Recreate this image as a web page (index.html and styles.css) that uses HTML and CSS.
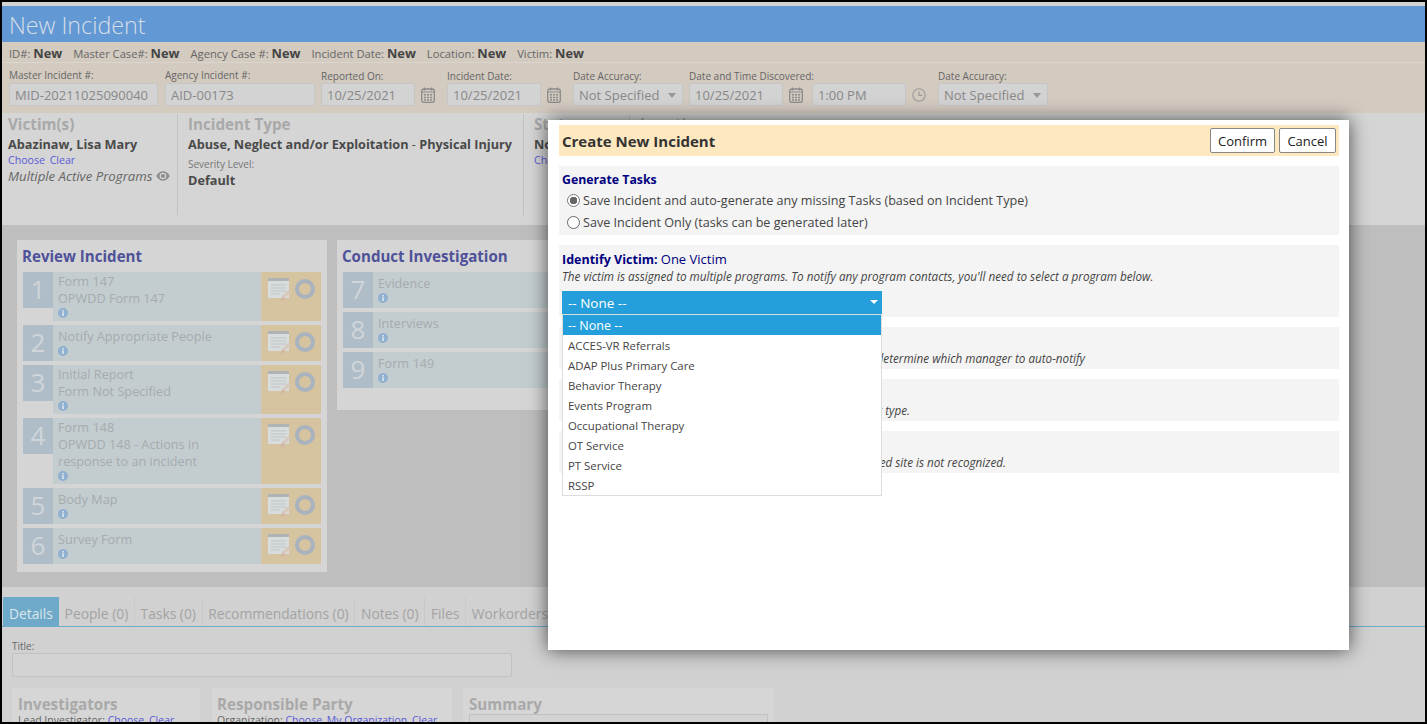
FILE: index.html
```html
<!DOCTYPE html>
<html lang="en">
<head>
    <meta charset="UTF-8">
    <title>New Incident</title>
    <link rel="stylesheet" href="styles.css">
</head>
<body>
    <svg class="sprites" width="0" height="0">
        <symbol id="i-cal" viewBox="0 0 14 16">
            <rect x="0.7" y="2" width="12.6" height="13.3" rx="2" fill="none" stroke="currentColor" stroke-width="1.3"/>
            <path d="M3.5 0.5v3M10.5 0.5v3M1 5h12" stroke="currentColor" stroke-width="1.2" fill="none"/>
            <path d="M3 7h2v1.5H3zM6 7h2v1.5H6zM9 7h2v1.5H9zM3 9.7h2v1.5H3zM6 9.7h2v1.5H6zM9 9.7h2v1.5H9zM3 12.2h2v1.5H3zM6 12.2h2v1.5H6zM9 12.2h2v1.5H9z" fill="currentColor"/>
        </symbol>
        <symbol id="i-clock" viewBox="0 0 14 14">
            <circle cx="7" cy="7" r="6.2" fill="none" stroke="currentColor" stroke-width="1.1"/>
            <path d="M7 3.2V7.4H10.2" fill="none" stroke="currentColor" stroke-width="1.1"/>
        </symbol>
        <symbol id="i-eye" viewBox="0 0 14 10">
            <path d="M0.2 5C2 1.8 4.4 0.3 7 0.3S12 1.8 13.8 5C12 8.2 9.6 9.7 7 9.7S2 8.2 0.2 5Z" fill="currentColor"/>
            <circle cx="7" cy="5" r="3.3" fill="#d5d5d5"/>
            <circle cx="7" cy="5" r="2.1" fill="currentColor"/>
        </symbol>
        <symbol id="i-info" viewBox="0 0 10 10">
            <circle cx="5" cy="5" r="5" fill="#8fb0cf"/>
            <path d="M4.2 2h1.6v1.4H4.2zM4.2 4.2h1.6v3.9H4.2z" fill="#dfe6ec"/>
        </symbol>
        <symbol id="i-form" viewBox="0 0 23 24">
            <rect x="0" y="0" width="21" height="20" fill="#d9dcdc"/>
            <rect x="0" y="0" width="21" height="3" fill="#b0b3b5"/>
            <path d="M3 7h15M3 10h15M3 13h15M3 16h9" stroke="#bfc5c8" stroke-width="1"/>
            <path d="M14 18l6.500-6.500 2.500 2.500-6.500 6.500z" fill="#d6cabf"/>
            <path d="M13 23.500l1-5.500 3 3z" fill="#d2b3a4"/>
        </symbol>
    </svg>

    <div class="frame">
        <div class="title-bar">New Incident</div>

        <div class="info-row">
            <span>ID#: <b>New</b></span>
            <span>Master Case#: <b>New</b></span>
            <span>Agency Case #: <b>New</b></span>
            <span>Incident Date: <b>New</b></span>
            <span>Location: <b>New</b></span>
            <span>Victim: <b>New</b></span>
        </div>

        <div class="form-row">
            <div class="field w-master"><label>Master Incident #:</label><input class="box" value="MID-20211025090040" readonly></div>
            <div class="field w-agency"><label>Agency Incident #:</label><input class="box" value="AID-00173" readonly></div>
            <div class="field low">
                <label>Reported On:</label>
                <div class="with-icon"><input class="box w-date" value="10/25/2021" readonly><svg class="ico"><use href="#i-cal"/></svg></div>
            </div>
            <div class="field low">
                <label>Incident Date:</label>
                <div class="with-icon"><input class="box w-date" value="10/25/2021" readonly><svg class="ico"><use href="#i-cal"/></svg></div>
            </div>
            <div class="field low">
                <label>Date Accuracy:</label>
                <div class="box w-select">Not Specified<span class="caret"></span></div>
            </div>
            <div class="field low">
                <label>Date and Time Discovered:</label>
                <div class="with-icon">
                    <input class="box w-date" value="10/25/2021" readonly><svg class="ico"><use href="#i-cal"/></svg>
                    <input class="box w-date time" value="1:00 PM" readonly><svg class="ico ico-clock"><use href="#i-clock"/></svg>
                </div>
            </div>
            <div class="field low">
                <label>Date Accuracy:</label>
                <div class="box w-select">Not Specified<span class="caret"></span></div>
            </div>
        </div>

        <div class="summary-panel">
            <div class="col col-victim">
                <h2>Victim(s)</h2>
                <p class="strong">Abazinaw, Lisa Mary</p>
                <p class="links"><a>Choose</a> <a>Clear</a></p>
                <p class="programs">Multiple Active Programs <svg class="eye"><use href="#i-eye"/></svg></p>
            </div>
            <div class="col col-type">
                <h2>Incident Type</h2>
                <p class="strong">Abuse, Neglect and/or Exploitation <span class="dash">-</span> Physical Injury</p>
                <p class="small">Severity Level:</p>
                <p class="strong">Default</p>
            </div>
            <div class="col col-status">
                <h2>Status</h2>
                <p class="strong">Not Started</p>
                <p class="links"><a>Change</a></p>
            </div>
            <div class="col col-location">
                <h2>Location</h2>
            </div>
        </div>

        <div class="workflow">
            <section class="stage">
                <h3>Review Incident</h3>
                <div class="task">
                    <div class="num">1</div>
                    <div class="task-body"><p>Form 147</p><p>OPWDD Form 147</p><svg class="info"><use href="#i-info"/></svg></div>
                    <div class="task-actions"><svg class="form-ico"><use href="#i-form"/></svg><span class="ring"></span></div>
                </div>
                <div class="task">
                    <div class="num">2</div>
                    <div class="task-body pad-top"><p>Notify Appropriate People</p><svg class="info"><use href="#i-info"/></svg></div>
                    <div class="task-actions"><svg class="form-ico"><use href="#i-form"/></svg><span class="ring"></span></div>
                </div>
                <div class="task">
                    <div class="num">3</div>
                    <div class="task-body"><p>Initial Report</p><p>Form Not Specified</p><svg class="info"><use href="#i-info"/></svg></div>
                    <div class="task-actions"><svg class="form-ico"><use href="#i-form"/></svg><span class="ring"></span></div>
                </div>
                <div class="task">
                    <div class="num">4</div>
                    <div class="task-body"><p>Form 148</p><p>OPWDD 148 - Actions in<br>response to an incident</p><svg class="info"><use href="#i-info"/></svg></div>
                    <div class="task-actions"><svg class="form-ico"><use href="#i-form"/></svg><span class="ring"></span></div>
                </div>
                <div class="task">
                    <div class="num">5</div>
                    <div class="task-body pad-top"><p>Body Map</p><svg class="info"><use href="#i-info"/></svg></div>
                    <div class="task-actions"><svg class="form-ico"><use href="#i-form"/></svg><span class="ring"></span></div>
                </div>
                <div class="task">
                    <div class="num">6</div>
                    <div class="task-body pad-top"><p>Survey Form</p><svg class="info"><use href="#i-info"/></svg></div>
                    <div class="task-actions"><svg class="form-ico"><use href="#i-form"/></svg><span class="ring"></span></div>
                </div>
            </section>
            <section class="stage stage-short">
                <h3>Conduct Investigation</h3>
                <div class="task">
                    <div class="num">7</div>
                    <div class="task-body pad-top"><p>Evidence</p><svg class="info"><use href="#i-info"/></svg></div>
                    <div class="task-actions"></div>
                </div>
                <div class="task">
                    <div class="num">8</div>
                    <div class="task-body pad-top"><p>Interviews</p><svg class="info"><use href="#i-info"/></svg></div>
                    <div class="task-actions"></div>
                </div>
                <div class="task">
                    <div class="num">9</div>
                    <div class="task-body pad-top"><p>Form 149</p><svg class="info"><use href="#i-info"/></svg></div>
                    <div class="task-actions"></div>
                </div>
            </section>
        </div>

        <div class="details">
            <div class="tabs">
                <a class="tab active">Details</a>
                <a class="tab">People (0)</a>
                <a class="tab">Tasks (0)</a>
                <a class="tab">Recommendations (0)</a>
                <a class="tab">Notes (0)</a>
                <a class="tab">Files</a>
                <a class="tab">Workorders</a>
            </div>
            <div class="title-field">
                <label>Title:</label>
                <div class="title-input"></div>
            </div>
            <div class="detail-cards">
                <div class="detail-card w-inv">
                    <h2>Investigators</h2>
                    <p>Lead Investigator: <a>Choose</a> <a>Clear</a></p>
                </div>
                <div class="detail-card w-resp">
                    <h2>Responsible Party</h2>
                    <p>Organization: <a>Choose</a> <a>My Organization</a> <a>Clear</a></p>
                </div>
                <div class="detail-card w-sum">
                    <h2>Summary</h2>
                    <div class="summary-box"></div>
                </div>
            </div>
        </div>

        <!-- dialogo -->
        <div class="modal">
            <div class="modal-head">
                <h1>Create New Incident</h1>
                <div class="modal-btns">
                    <button class="btn btn-confirm">Confirm</button>
                    <button class="btn btn-cancel">Cancel</button>
                </div>
            </div>

            <div class="block block-tasks">
                <h4>Generate Tasks</h4>
                <label class="radio-line"><span class="radio on"></span>Save Incident and auto-generate any missing Tasks (based on Incident Type)</label>
                <label class="radio-line"><span class="radio"></span>Save Incident Only (tasks can be generated later)</label>
            </div>

            <div class="block block-victim">
                <h4>Identify Victim: <span>One Victim</span></h4>
                <p class="note">The victim is assigned to multiple programs. To notify any program contacts, you'll need to select a program below.</p>
                <div class="pick">
                    <div class="pick-value">-- None --<span class="pick-caret"></span></div>
                    <ul class="pick-list">
                        <li class="current">-- None --</li>
                        <li>ACCES-VR Referrals</li>
                        <li>ADAP Plus Primary Care</li>
                        <li>Behavior Therapy</li>
                        <li>Events Program</li>
                        <li>Occupational Therapy</li>
                        <li>OT Service</li>
                        <li>PT Service</li>
                        <li>RSSP</li>
                    </ul>
                </div>
            </div>

            <div class="block block-small note-manager">
                <h4>Identify Manager</h4>
                <p class="note">The location of the incident is used to determine which manager to auto-notify</p>
            </div>
            <div class="block block-small note-type">
                <h4>Incident Type</h4>
                <p class="note">Contacts are notified based on the incident type.</p>
            </div>
            <div class="block block-small note-site">
                <h4>Identify Site</h4>
                <p class="note">Site contacts are not notified when the entered site is not recognized.</p>
            </div>
        </div>
    </div>
</body>
</html>
```

FILE: styles.css
```css
* {
    box-sizing: border-box;
}
html, body {
    margin: 0;
    height: 100%;
    overflow: hidden;
}
body {
    font-family: "Open Sans", sans-serif;
    font-size: 12px;
    color: #555;
    background: #000;
}
p, h1, h2, h3, h4, ul {
    margin: 0;
    padding: 0;
}
.sprites {
    display: block;
    height: 0;
}
.frame {
    position: relative;
    width: 1423px;
    height: 720px;
    margin: 2px;
    padding-top: 4px;
    background: #d3d3d3;
    overflow: hidden;
}

/* encabezado */
.title-bar {
    height: 36px;
    padding-left: 7px;
    background: #6299d5;
    color: #d7dee6;
    font-size: 23.300px;
    font-weight: 300;
    line-height: 39px;
}
.info-row {
    display: flex;
    gap: 11px;
    height: 21px;
    padding-left: 7px;
    background: #d3cac0;
    border-bottom: 1px solid #dcd5cd;
    font-size: 11.200px;
    line-height: 22px;
    color: #666;
}
.info-row b {
    font-size: 12.800px;
    color: #444;
}
.form-row {
    display: flex;
    height: 50px;
    padding-left: 7px;
    background: #d3cac0;
}
.field {
    margin-right: 6px;
    padding-top: 5px;
}
.field.low {
    padding-top: 6px;
}
.field label {
    display: block;
    height: 15px;
    font-size: 10px;
    line-height: 15px;
    color: #666;
}
.field.low label {
    height: 14px;
}
.box {
    display: block;
    height: 23px;
    padding: 0 5px;
    border: 1px solid #c6c6c6;
    border-radius: 2px;
    background: #d3d3d3;
    font-family: "Open Sans", sans-serif;
    font-size: 13px;
    line-height: 22px;
    color: #888;
    outline: none;
}
.w-master {
    width: 149px;
    margin-right: 7px;
}
.w-agency {
    width: 150px;
}
.w-master .box, .w-agency .box {
    width: 100%;
}
.w-date {
    width: 94px;
}
.w-date.time {
    margin-left: 9px;
}
.w-select {
    position: relative;
    width: 110px;
}
.caret {
    position: absolute;
    right: 6px;
    top: 9px;
    border: 4px solid transparent;
    border-top: 5px solid #999;
    border-bottom: 0;
}
.with-icon {
    display: flex;
    align-items: center;
    margin-right: 6px;
}
.ico {
    width: 14px;
    height: 16px;
    margin-left: 6px;
    color: #8b8b8b;
}
.ico-clock {
    color: #9a9a9a;
}

/* panel */
.summary-panel {
    display: flex;
    height: 112px;
    padding: 1px 0 10px;
    background: #d5d5d5;
}
.col {
    padding-left: 10px;
    border-right: 1px solid #c2c2c2;
}
.col h2, .detail-card h2 {
    font-size: 15.200px;
    line-height: 21px;
    color: #a9a9a9;
}
.col-victim {
    width: 176px;
    padding-left: 6px;
}
.col-type {
    width: 346px;
}
.col-status {
    width: 106px;
}
.col-location {
    border-right: 0;
}
.strong {
    font-size: 12.700px;
    font-weight: 700;
    line-height: 18px;
    color: #4a4a4a;
}
.dash {
    font-weight: 400;
}
.links {
    font-size: 10.600px;
    line-height: 14px;
}
.links a, .detail-card a {
    margin-right: 2px;
    color: #5a5ad6;
}
.programs {
    font-size: 13.200px;
    font-style: italic;
    line-height: 19px;
    color: #666;
}
.eye {
    width: 14px;
    height: 10px;
    color: #8f8f8f;
}
.small {
    margin-top: 4px;
    font-size: 10px;
    line-height: 14px;
    color: #777;
}

/* tareas */
.workflow {
    display: flex;
    align-items: flex-start;
    gap: 10px;
    height: 362px;
    padding: 15px 0 0 15px;
    background: #bebebe;
}
.stage {
    width: 310px;
    padding: 0 6px 8px;
    background: #d5d5d5;
}
.stage-short {
    height: 170px;
}
.stage h3 {
    height: 32px;
    margin-left: -1px;
    font-size: 15.100px;
    line-height: 33px;
    color: #4f5199;
}
.task {
    display: flex;
    margin-bottom: 4px;
}
.task:last-child {
    margin-bottom: 0;
}
.num {
    flex: none;
    width: 30px;
    height: 36px;
    background: #afbdc8;
    color: #d0d5d9;
    font-size: 26px;
    line-height: 35px;
    text-align: center;
}
.task-body {
    flex: 1;
    min-height: 36px;
    padding: 1px 0 3px 5px;
    background: #c3cdd0;
    font-size: 12.700px;
    line-height: 17px;
    color: #a6abad;
}
.task-body.pad-top {
    padding-top: 3px;
}
.info {
    display: block;
    width: 10px;
    height: 10px;
    margin-top: 1px;
}
.task-actions {
    display: flex;
    flex: none;
    gap: 4px;
    width: 60px;
    padding: 6px 0 0 7px;
    background: #d6c3a0;
}
.form-ico {
    width: 23px;
    height: 24px;
}
.ring {
    width: 20px;
    height: 20px;
    margin-top: 1px;
    border: 4px solid #a9b2bf;
    border-radius: 50%;
}

/* pestañas */
.details {
    padding-top: 10px;
    background: #d1d1d1;
    height: 135px;
    overflow: hidden;
}
.tabs {
    display: flex;
    height: 30px;
    padding-left: 1px;
    border-bottom: 1px solid #6eaacb;
}
.tab {
    height: 29px;
    padding: 0 5.700px;
    border-right: 1px solid #c9c9c9;
    font-size: 13.800px;
    line-height: 34px;
    color: #a3a3a3;
}
.tab.active {
    padding: 0 6px;
    border-right: 0;
    background: #6ea9c9;
    color: #dce6ec;
}
.title-field {
    padding: 13px 0 0 10px;
}
.title-field label {
    display: block;
    height: 13px;
    font-size: 10px;
    line-height: 13px;
    color: #666;
}
.title-input {
    width: 500px;
    height: 24px;
    border: 1px solid #c2c2c2;
    border-radius: 2px;
    background: #d3d3d3;
}
.detail-cards {
    display: flex;
    gap: 12px;
    padding: 11px 0 0 10px;
}
.detail-card {
    height: 60px;
    padding: 6px 6px 0;
    background: #d6d6d6;
}
.detail-card p {
    margin-top: -2px;
    font-size: 10.500px;
    line-height: 15px;
    color: #666;
}
.w-inv {
    width: 188px;
}
.w-resp {
    width: 240px;
    padding-left: 5px;
}
.w-sum {
    width: 311px;
    margin-left: -1px;
}
.summary-box {
    height: 30px;
    margin-top: -1px;
    border: 1px solid #c2c2c2;
    background: #d3d3d3;
}

/* modal */
.modal {
    position: absolute;
    left: 546px;
    top: 118px;
    width: 801px;
    height: 530px;
    padding: 5px 10px 0 11px;
    background: #fff;
    box-shadow: 0 0 18px rgba(0, 0, 0, 0.65);
}
.modal-head {
    display: flex;
    align-items: center;
    justify-content: space-between;
    height: 31px;
    padding: 0 3px;
    background: #fee8c0;
}
.modal-head h1 {
    font-size: 15px;
    font-weight: 700;
    color: #333;
}
.modal-btns {
    display: flex;
    gap: 4px;
}
.btn {
    height: 25px;
    padding: 0;
    border: 1px solid #888;
    border-radius: 2px;
    background: #fff;
    font-family: "Open Sans", sans-serif;
    font-size: 13px;
    color: #222;
}
.btn-confirm {
    width: 65px;
}
.btn-cancel {
    width: 57px;
}
.block {
    margin-top: 10px;
    padding: 6px 3px 0;
    background: #f4f4f4;
}
.block h4 {
    height: 16px;
    font-size: 12.300px;
    font-weight: 700;
    line-height: 16px;
    color: #000080;
}
.block h4 span {
    font-size: 13px;
    font-weight: 400;
}
.block-tasks {
    height: 69px;
}
.block-tasks h4 {
    margin-bottom: 1px;
}
.radio-line {
    display: flex;
    align-items: center;
    height: 22px;
    padding-left: 5px;
    font-size: 12.600px;
    color: #444;
}
.radio {
    width: 13px;
    height: 13px;
    margin-right: 3px;
    border: 1px solid #666;
    border-radius: 50%;
    background: #fff;
}
.radio.on {
    border-color: #777;
    background: radial-gradient(circle, #666 0 3.500px, #fff 4px);
}
.block-victim {
    height: 72px;
}
.block-victim h4 {
    font-size: 12.500px;
}
.block-small {
    height: 42px;
}
.note {
    font-size: 11.700px;
    font-style: italic;
    line-height: 18px;
    color: #444;
}
.block-small .note {
    text-align: right;
}
.note-manager .note {
    padding-right: 251px;
}
.note-type .note {
    padding-right: 426px;
}
.note-site .note {
    padding-right: 330px;
}
.pick {
    position: relative;
    width: 320px;
    margin-top: 6px;
}
.pick-value {
    position: relative;
    height: 23px;
    padding-left: 6px;
    background: #259fdb;
    color: #fff;
    font-size: 13.500px;
    line-height: 25px;
}
.pick-caret {
    position: absolute;
    right: 4px;
    top: 9px;
    border: 4px solid transparent;
    border-top: 4px solid #fff;
    border-bottom: 0;
}
.pick-list {
    position: absolute;
    left: 0;
    top: 23px;
    width: 320px;
    border: 1px solid #ddd;
    background: #fff;
    list-style: none;
    z-index: 2;
}
.pick-list li {
    height: 20px;
    padding-left: 5px;
    font-size: 11.400px;
    line-height: 22px;
    color: #444;
}
.pick-list li.current {
    background: #259fdb;
    color: #fff;
    font-size: 12.500px;
}
```
